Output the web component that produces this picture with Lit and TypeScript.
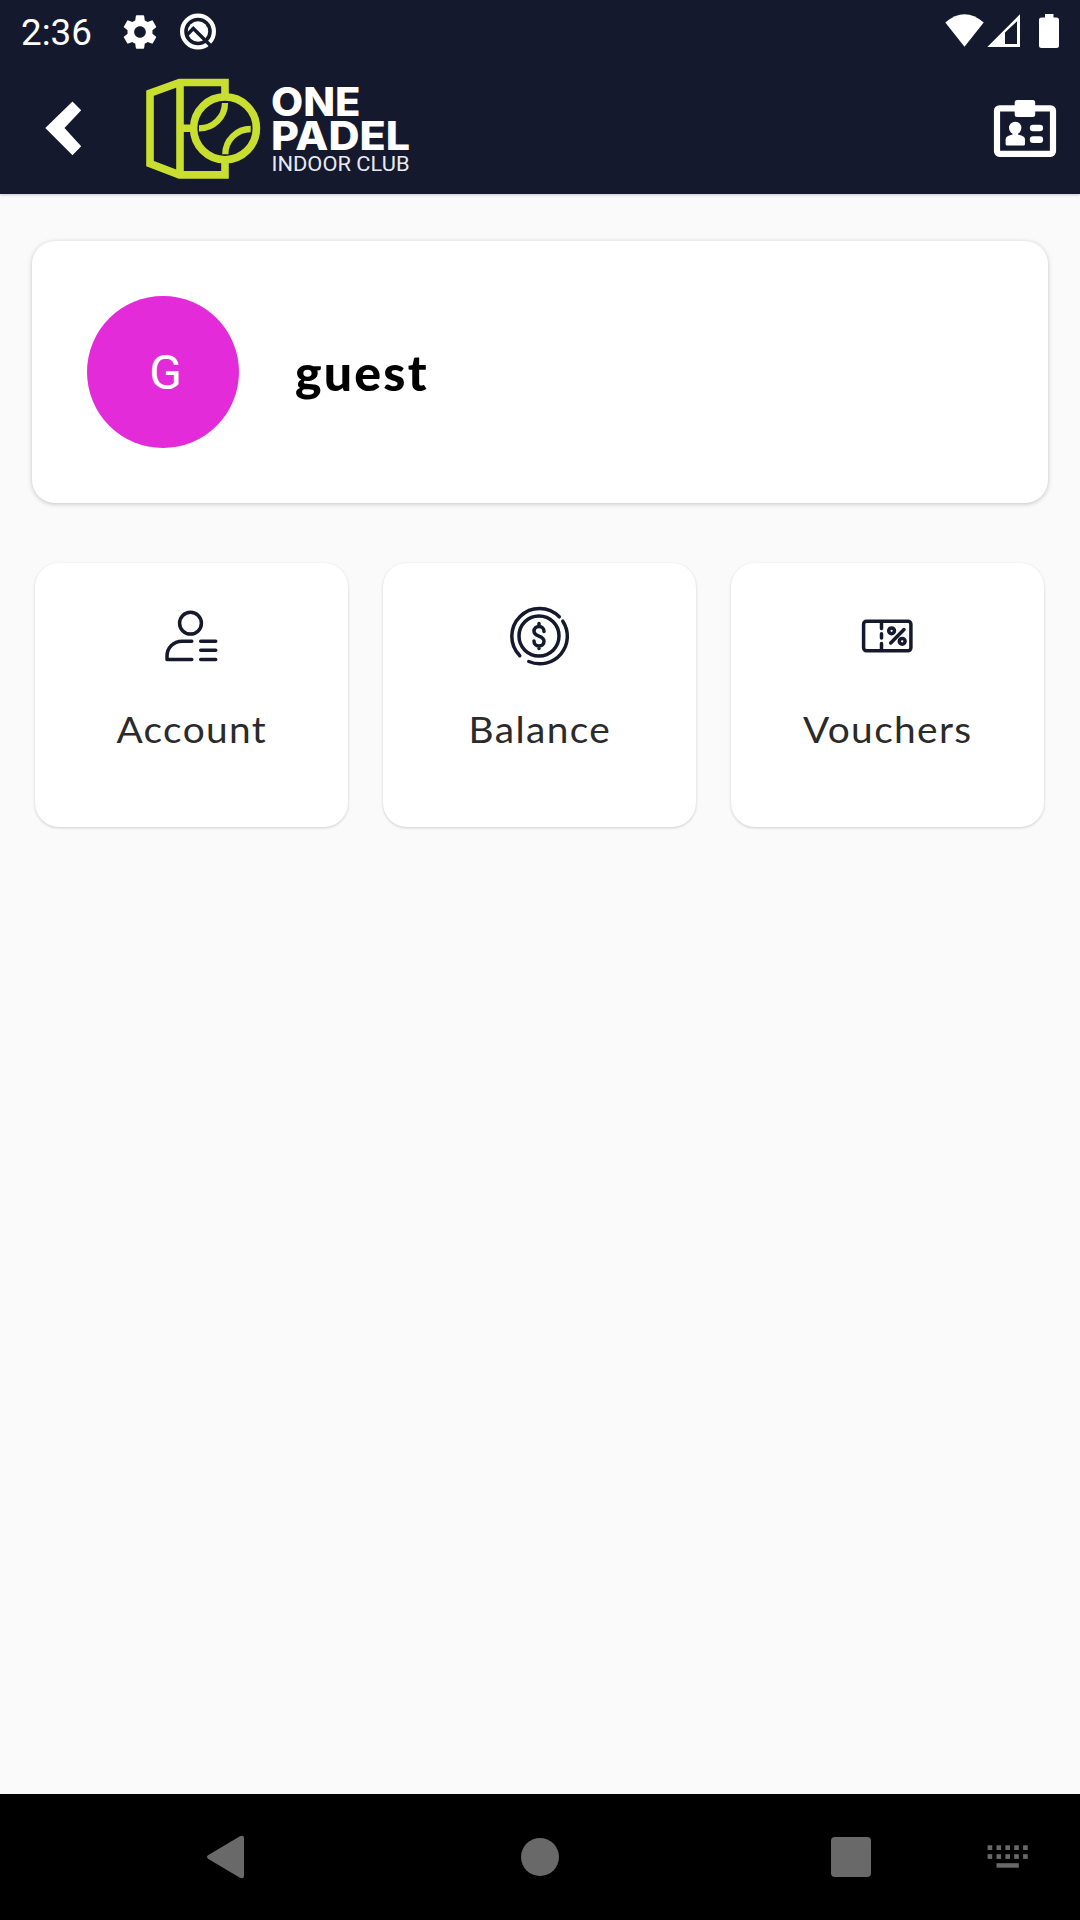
import { LitElement, html, svg, css } from "lit";
import { customElement, property } from "lit/decorators.js";

const ICONS: Record<string, unknown> = {
  account: svg`
    <circle cx="190" cy="623.2" r="10.9"/>
    <path d="M191.3 641.2h-9.8c-8.5 0-15 6.700-15 15v3.200h24.800M200.200 641.200h15M200.200 650.300h15M200.200 659.400h15"/>`,
  balance: svg`
    <circle cx="539" cy="636" r="20"/>
    <path d="M559.3 616.800A27.500 27.500 0 1 0 519.800 655.700M562.800 621.200A27.500 27.500 0 0 1 528.800 661.500" />
    <path d="M544 631.500c0-3-2-5-5-5s-5 1.900-5 4.700c0 6 10 3.800 10 10 0 2.900-2 4.700-5 4.700s-5-2-5-5M539 623.500v3M539 646v2.600"/>`,
  vouchers: svg`
    <rect x="863.600" y="621.200" width="47.300" height="29.600" rx="3"/>
    <path d="M881.500 622v6.500M881.500 633.800v4.200M881.500 643.500v6.500M904 629.500l-13.300 13.500"/>
    <circle cx="891.600" cy="630.800" r="2.900"/><circle cx="902.200" cy="641.300" r="2.900"/>`,
};

const VIEWS: Record<string, string> = {
  account: "156.5 601 70 70",
  balance: "505 601 70 70",
  vouchers: "853 601 70 70",
};

@customElement("menu-tile")
export class MenuTile extends LitElement {
  @property() icon = "account";
  @property() label = "";

  static styles = css`
    :host {
      display: flex;
      flex-direction: column;
      align-items: center;
      box-sizing: border-box;
      height: 264px;
      padding-top: 38px;
      border-radius: 24px;
      background: #fff;
      box-shadow: 0 1px 3px rgba(0, 0, 0, 0.18);
    }
    .icon {
      width: 70px;
      height: 70px;
      fill: none;
      stroke: #15192d;
      stroke-width: 3.5;
      stroke-linecap: round;
      stroke-linejoin: round;
    }
    .label {
      margin-top: 36px;
      font: 400 37px/44px Lato, sans-serif;
      color: #2b2b2b;
      letter-spacing: 1.3px;
      transform: scaleX(1.05);
    }
  `;

  render() {
    return html`
      <svg class="icon" viewBox=${VIEWS[this.icon]}>${ICONS[this.icon]}</svg>
      <span class="label">${this.label}</span>
    `;
  }
}

@customElement("app-root")
export class AppRoot extends LitElement {
  static styles = css`
    :host {
      display: flex;
      flex-direction: column;
      width: 1080px;
      height: 1920px;
      background: #fafafa;
      overflow: hidden;
    }
    svg {
      display: block;
      flex: none;
    }
    .top {
      height: 194px;
      flex: none;
      background: #15192d;
      box-shadow: 0 1px 3px rgba(0, 0, 0, 0.2);
    }
    .status {
      display: flex;
      align-items: center;
      height: 64px;
      padding: 0 21px 0 20px;
      color: #fff;
      fill: #fff;
    }
    .time {
      width: 99px;
      padding: 2px 0 0 1px;
      font: 400 36.8px/62px Roboto, sans-serif;
    }
    .spacer {
      flex: 1;
    }
    .debug {
      margin-left: 18px;
    }
    .bar {
      display: flex;
      align-items: center;
      height: 130px;
      padding: 0 20px 0 40px;
    }
    .logo {
      margin-left: 56px;
    }
    .one {
      font: 800 39px Inter, sans-serif;
      fill: #fff;
    }
    .indoor {
      font: 400 19.6px Roboto, sans-serif;
      fill: #e8eaf2;
    }
    .content {
      flex: 1;
      padding: 47px 32px 0;
    }
    .profile {
      display: flex;
      align-items: center;
      box-sizing: border-box;
      height: 262px;
      padding-left: 55px;
      border-radius: 23px;
      background: #fff;
      box-shadow: 0 1px 5px rgba(0, 0, 0, 0.22);
    }
    .avatar {
      width: 152px;
      height: 152px;
      border-radius: 50%;
      background: #e32bd9;
      color: #fff;
      font: 400 48px/154px Roboto, sans-serif;
      text-align: center;
      text-indent: 5px;
    }
    .name {
      margin-left: 56px;
      font: 900 50px/60px Lato, sans-serif;
      color: #000;
      letter-spacing: 2.2px;
    }
    .tiles {
      display: grid;
      grid-template-columns: repeat(3, 313px);
      gap: 35px;
      padding: 60px 3px 0;
    }
    .nav {
      display: flex;
      align-items: center;
      flex: none;
      height: 126px;
      padding: 0 51px 0 206px;
      background: #000;
      fill: #696969;
    }
    .home {
      margin-left: 275px;
    }
    .recent {
      margin-left: 271px;
    }
  `;

  render() {
    return html`
      <header class="top">
        <div class="status">
          <span class="time">2:36</span>
          <svg width="40" height="40" viewBox="0 0 24 24">
            <path d="M19.430 12.980c.040-.320.070-.640.070-.980s-.030-.660-.070-.980l2.110-1.650c.190-.150.240-.420.120-.640l-2-3.460c-.120-.220-.390-.300-.610-.220l-2.490 1c-.520-.400-1.080-.730-1.690-.980l-.380-2.650C14.460 2.180 14.250 2 14 2h-4c-.250 0-.460.180-.490.420l-.380 2.650c-.610.250-1.170.590-1.690.980l-2.490-1c-.230-.090-.490 0-.610.220l-2 3.460c-.130.220-.070.490.120.640l2.110 1.650c-.040.320-.070.650-.070.980s.030.660.070.980l-2.110 1.650c-.190.150-.240.420-.120.640l2 3.460c.120.220.390.300.610.220l2.490-1c.520.400 1.080.730 1.690.980l.380 2.650c.030.240.240.420.490.420h4c.250 0 .460-.180.490-.420l.380-2.650c.610-.250 1.170-.590 1.690-.980l2.490 1c.230.090.490 0 .610-.220l2-3.460c.120-.220.070-.490-.120-.640l-2.110-1.650zM12 15.500c-1.930 0-3.500-1.570-3.500-3.500s1.570-3.500 3.500-3.500 3.500 1.570 3.500 3.500-1.570 3.500-3.500 3.500z"/>
          </svg>
          <svg class="debug" width="40" height="40" viewBox="178 12 40 40">
            <circle cx="198" cy="31.500" r="15.900" fill="none" stroke="#fff" stroke-width="4.200"/>
            <circle cx="198" cy="31.500" r="10.200"/>
            <path d="M187 35L193.300 28.500L210.500 45.500" fill="none" stroke="#15192d" stroke-width="3.400"/>
          </svg>
          <span class="spacer"></span>
          <svg width="114" height="40" viewBox="945 12 114 40">
            <path d="M945.300 22.500Q964.500 6 983.700 22.500L964.500 46.700z"/>
            <path fill-rule="evenodd" d="M987.300 47L1020 14.300V47zM1005 32.500V44H1017V21.200z"/>
            <path d="M1045 14h8.500v3.500h3a2.500 2.500 0 0 1 2.500 2.500v25.500a2.500 2.500 0 0 1-2.500 2.500h-15a2.500 2.500 0 0 1-2.500-2.500V20a2.500 2.500 0 0 1 2.500-2.500h3.500z"/>
          </svg>
        </div>
        <div class="bar">
          <svg width="50" height="64" viewBox="40 97 50 64">
            <path fill="#fff" d="M45.300 128L72.500 101.500L81.200 110.200L64.500 128L81.200 146.300L72.500 155.300z"/>
          </svg>
          <svg class="logo" width="266" height="110" viewBox="146 74 266 110">
            <g fill="none" stroke="#c8df2f" stroke-width="7.600">
              <path d="M225 97V82.500H179.500L150 93.200V163.600L179.500 174.900H225V160M180 82.500V174.900M180 128.300H191"/>
              <circle cx="225" cy="128.300" r="31.400"/>
              <path stroke-width="6.300" d="M225 103A25.800 25.300 0 0 1 199 128.300M250.700 129A25.400 25.200 0 0 0 225.300 154.200"/>
            </g>
            <text class="one" x="271" y="116" textLength="89.500" lengthAdjust="spacingAndGlyphs">ONE</text>
            <text class="one" x="271" y="150" textLength="139" lengthAdjust="spacingAndGlyphs">PADEL</text>
            <text class="indoor" x="271.500" y="170.700" textLength="138" lengthAdjust="spacingAndGlyphs">INDOOR CLUB</text>
          </svg>
          <span class="spacer"></span>
          <svg width="68" height="64" viewBox="992 97 68 64">
            <rect x="997" y="108.300" width="56" height="45.500" rx="2.500" fill="none" stroke="#fff" stroke-width="6.200"/>
            <g fill="#fff">
              <rect x="1014.700" y="100" width="20.500" height="17" rx="2.500"/>
              <circle cx="1015.200" cy="128" r="6.200"/>
              <path d="M1012.500 131h5.500v3.500l4 1.200q3 1.200 3 4v4.200q0 1.600-1.600 1.600h-16.200q-1.600 0-1.600-1.600v-4.200q0-2.800 3-4l3.900-1.200z"/>
              <rect x="1029.800" y="124.700" width="13.300" height="6.600" rx="3.200"/>
              <rect x="1029.800" y="136.200" width="13.300" height="6.800" rx="3.200"/>
            </g>
          </svg>
        </div>
      </header>
      <main class="content">
        <section class="profile">
          <div class="avatar">G</div>
          <div class="name">guest</div>
        </section>
        <section class="tiles">
          <menu-tile icon="account" label="Account"></menu-tile>
          <menu-tile icon="balance" label="Balance"></menu-tile>
          <menu-tile icon="vouchers" label="Vouchers"></menu-tile>
        </section>
      </main>
      <nav class="nav">
        <svg width="39" height="44" viewBox="206 1835 39 44">
          <path d="M208 1855.300L239.500 1836.400Q244 1834.500 244 1838.500V1875.500Q244 1879.500 239.500 1877.600L208 1858.700Q206 1857 208 1855.300z"/>
        </svg>
        <svg class="home" width="40" height="40" viewBox="0 0 40 40"><circle cx="20" cy="20" r="19"/></svg>
        <svg class="recent" width="40" height="40" viewBox="0 0 40 40"><rect width="40" height="40" rx="4"/></svg>
        <span class="spacer"></span>
        <svg width="42" height="24" viewBox="987 1846 42 24">
          ${[987.6, 996.5, 1005.400, 1014.200, 1023.100].map(
            (x) => svg`<rect x=${x} y="1846.300" width="4.600" height="4.700"/><rect x=${x} y="1855.200" width="4.600" height="4.700"/>`
          )}
          <rect x="996.500" y="1864.200" width="22.300" height="4.500"/>
        </svg>
      </nav>
    `;
  }
}
